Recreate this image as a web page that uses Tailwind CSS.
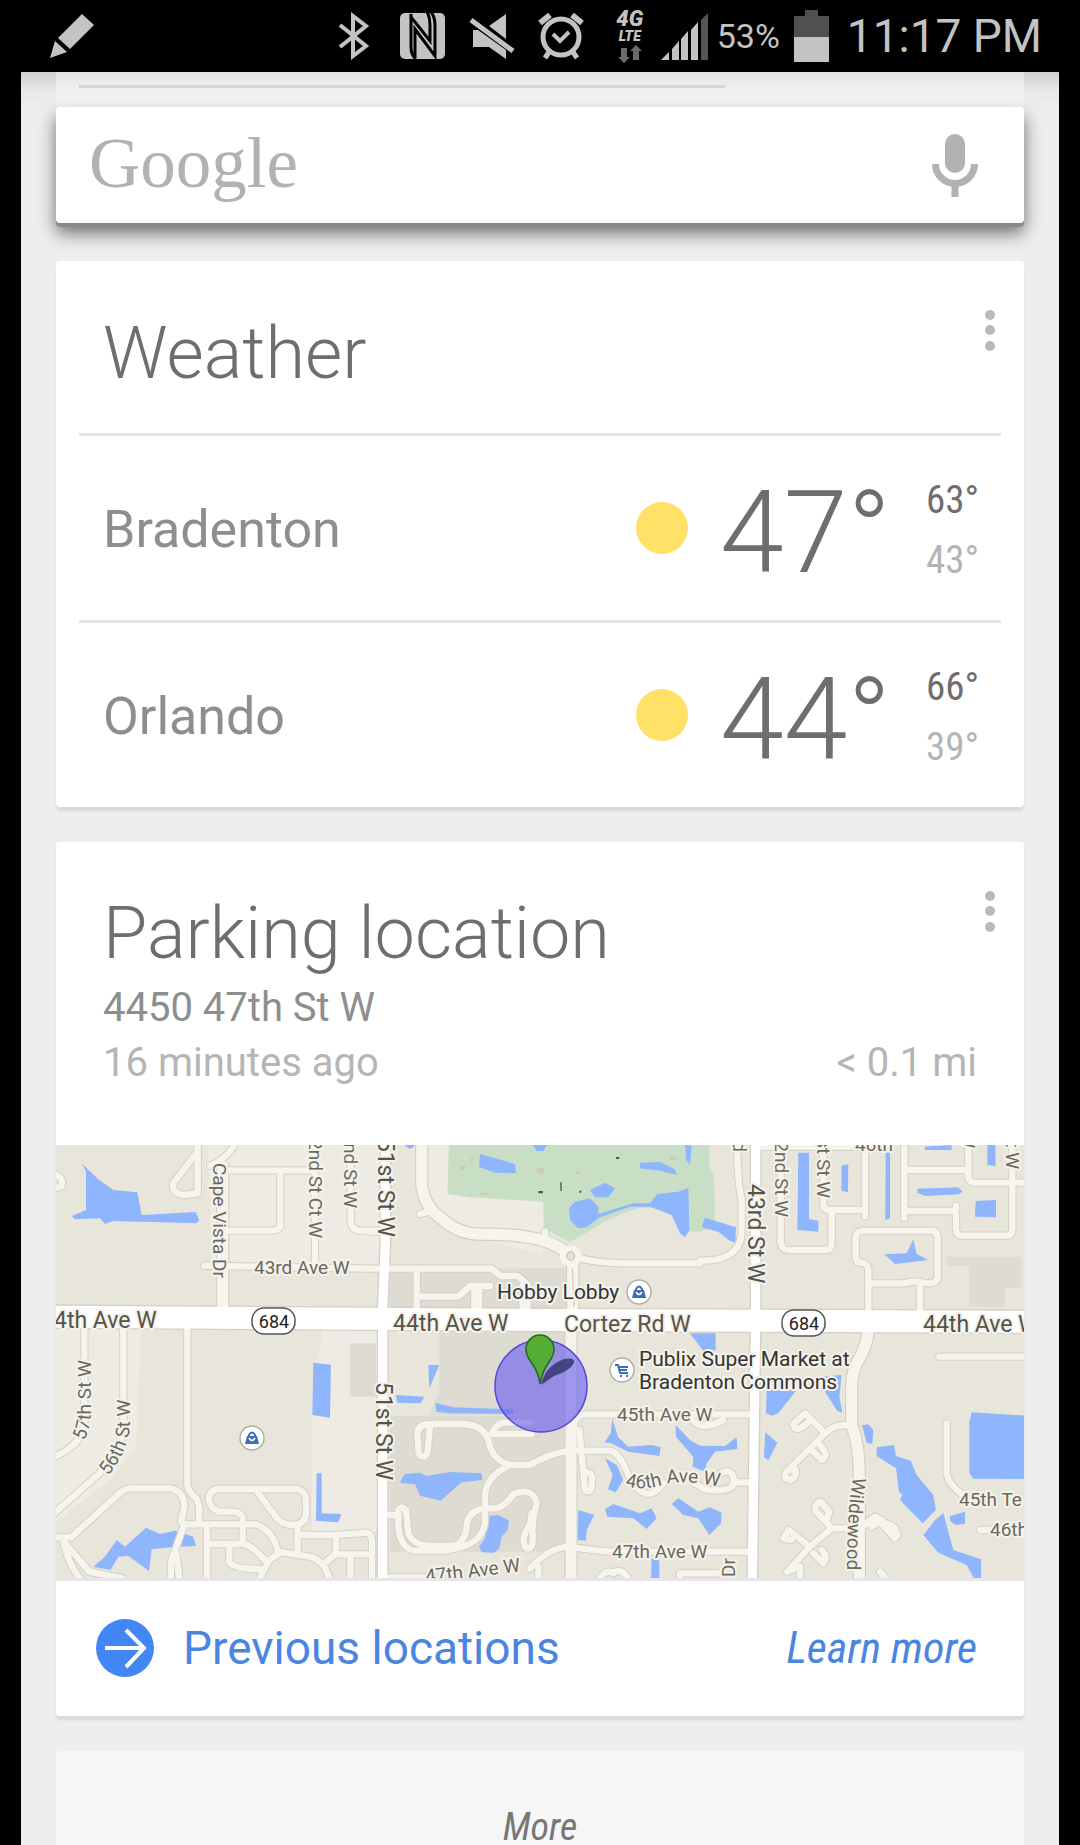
<!DOCTYPE html>
<html lang="en">
  <head>
    <meta charset="UTF-8" />
    <meta name="viewport" content="width=device-width, initial-scale=1.0" />
    <title>Google Now</title>
    <script src="https://cdn.jsdelivr.net/npm/@tailwindcss/browser@4"></script>
  </head>
  <body class="bg-black h-screen overflow-hidden flex flex-col font-['Roboto',sans-serif]">
    <!-- Status bar -->
    <header class="h-[72px] shrink-0 flex items-center pl-[49px] pr-[38px] text-[#c3c3c3]">
      <svg class="w-[46px] h-[46px]" viewBox="0 0 46 46" fill="currentColor">
        <path d="M33 1 L45 12 L21 36 L9 25 Z M6 28 L18 39 L1 45 Z" />
      </svg>

      <div class="ml-auto flex items-center">
        <!-- Bluetooth -->
        <svg class="w-8 h-[48px]" viewBox="0 0 32 48" fill="none" stroke="currentColor" stroke-width="4">
          <path d="M2 13 L28 34 L15 44 V4 L28 14 L2 35" />
        </svg>
        <!-- NFC -->
        <svg class="w-[45px] h-[46px] ml-[30px]" viewBox="0 0 45 46">
          <rect width="45" height="46" rx="5" fill="currentColor" />
          <path d="M11 1 V34 Q11 42 16 46 M11 4 L30 28 V12 Q30 4 27 -1 M15 44 V16 L35 43 V12 Q35 4 31 -1" fill="none" stroke="#000" stroke-width="3" />
        </svg>
        <!-- Muted -->
        <svg class="w-[46px] h-[48px] ml-6" viewBox="0 0 46 48" fill="currentColor">
          <path d="M37 2 V27 L20 14 Z M4 18 H9 L37 38 V47 L20 35 H4 Z" />
          <path d="M2 8 L44 39" stroke="currentColor" stroke-width="5" />
        </svg>
        <!-- Alarm -->
        <svg class="w-[48px] h-[48px] ml-[22px]" viewBox="0 0 48 48" fill="none" stroke="currentColor" stroke-width="5">
          <circle cx="24" cy="25" r="18" />
          <path d="M16 22 L23 29 L32 20" stroke-width="4" />
          <path d="M3 11 L13 3 M35 3 L45 11" stroke-width="6" />
          <path d="M12 40 L8 46 M36 40 L40 46" />
        </svg>
        <!-- 4G LTE -->
        <div class="ml-[28px] w-[34px] flex flex-col items-center">
          <span class="font-black italic text-[22px] leading-[20px]">4G</span>
          <span class="font-black italic text-[14px] leading-[14px]">LTE</span>
          <svg class="w-6 h-[18px] mt-[2px]" viewBox="0 0 24 18" fill="#6b6b6b">
            <path d="M3 3 H9 V12 H12 L6 18 L0 12 H3 Z M15 15 V6 H12 L18 0 L24 6 H21 V15 Z" />
          </svg>
        </div>
        <!-- Signal -->
        <svg class="w-[47px] h-[47px] ml-[14px]" viewBox="0 0 47 47" fill="currentColor">
          <path d="M8 39 V47 H0 Z M18 28 V47 H11 V36 Z M27 18 V47 H20 V26 Z M37 9 V47 H30 V17 Z" />
          <path d="M47 0 V47 H40 V7 Z" fill="#555" />
        </svg>
        <span class="ml-[9px] text-[34px] leading-10">53%</span>
        <!-- Battery -->
        <svg class="w-[35px] h-[52px] ml-[14px]" viewBox="0 0 35 52">
          <path d="M0 6 H11 V0 H24 V6 H35 V28 H0 Z" fill="#505050" />
          <path d="M0 27 H35 V52 H0 Z" fill="currentColor" />
        </svg>
        <time class="ml-[18px] text-[46px] leading-[54px]">11:17 PM</time>
      </div>
    </header>

    <main class="flex-1 mx-[21px] px-[35px] bg-[#eee] flex flex-col">
      <!-- Card scrolled under the search box -->
      <div class="-mx-[35px] px-[35px] h-[35px] shrink-0 bg-linear-to-b from-[#d2d2d2] via-[#e6e6e6] to-[#eee]">
        <div class="h-full bg-white/40 pt-[13px] pl-[23px]">
          <hr class="w-[646px] border-t-3 border-[#d6d6d6]" />
        </div>
      </div>

      <!-- Search -->
      <form class="h-[116px] shrink-0 bg-white rounded px-[33px] pr-[46px] flex items-center shadow-[0_4px_0_#8a8a8a,0_10px_18px_rgba(0,0,0,0.55)]">
        <label for="q" class="pb-1 font-['Liberation_Serif',serif] text-[71px] leading-[80px] text-[#b2b2b2]">Google</label>
        <input id="q" type="search" class="flex-1 min-w-0 h-20 px-4 text-[40px] outline-none" />
        <button type="button" aria-label="Voice search">
          <svg class="w-[46px] h-[63px]" viewBox="0 0 46 63" fill="#b2b2b2">
            <rect x="13" width="20" height="39" rx="10" />
            <path d="M3.5 30 A19.5 19.5 0 0 0 42.5 30 M23 49 V63" fill="none" stroke="#b2b2b2" stroke-width="7" />
          </svg>
        </button>
      </form>

      <!-- Weather -->
      <section class="mt-[38px] shrink-0 bg-white rounded shadow-[0_4px_2px_#dadada] px-[23px]">
        <div class="h-[172px] flex justify-between pl-6 pr-[6px]">
          <h2 class="pt-[50px] text-[72px] leading-[86px] font-light text-[#6e6e6e]">Weather</h2>
          <button type="button" aria-label="Weather options" class="self-start mt-[49px]">
            <svg class="w-[10px] h-[41px]" viewBox="0 0 10 41" fill="#bababa">
              <circle cx="5" cy="5" r="5" /><circle cx="5" cy="20" r="5" /><circle cx="5" cy="36" r="5" />
            </svg>
          </button>
        </div>
        <ul>
          <li class="h-[187px] border-t-3 border-[#e4e4e4] flex items-center pl-6 pr-[22px]">
            <span class="flex-1 pt-1 text-[52px] leading-[60px] text-[#8e8e8e]">Bradenton</span>
            <svg class="w-[52px] h-[52px]" viewBox="0 0 52 52" fill="#ffe168"><circle cx="26" cy="26" r="26" /></svg>
            <span class="ml-8 w-[175px] pt-[10px] text-[115px] leading-[134px] font-light text-[#6e6e6e]">47°</span>
            <span class="ml-[31px] pt-[3px] flex flex-col font-['Roboto_Condensed','Liberation_Sans_Narrow',sans-serif] text-[39px] leading-[60px]">
              <span class="text-[#6e6e6e]">63°</span>
              <span class="text-[#b5b5b5]">43°</span>
            </span>
          </li>
          <li class="h-[187px] border-t-3 border-[#e4e4e4] flex items-center pl-6 pr-[22px]">
            <span class="flex-1 pt-1 text-[52px] leading-[60px] text-[#8e8e8e]">Orlando</span>
            <svg class="w-[52px] h-[52px]" viewBox="0 0 52 52" fill="#ffe168"><circle cx="26" cy="26" r="26" /></svg>
            <span class="ml-8 w-[175px] pt-[10px] text-[115px] leading-[134px] font-light text-[#6e6e6e]">44°</span>
            <span class="ml-[31px] pt-[3px] flex flex-col font-['Roboto_Condensed','Liberation_Sans_Narrow',sans-serif] text-[39px] leading-[60px]">
              <span class="text-[#6e6e6e]">66°</span>
              <span class="text-[#b5b5b5]">39°</span>
            </span>
          </li>
        </ul>
      </section>

      <!-- Parking location -->
      <section class="mt-[35px] shrink-0 bg-white rounded shadow-[0_4px_2px_#dadada]">
        <div class="h-[303px] pl-[47px] pr-[47px] pt-[49px]">
          <div class="flex justify-between">
            <h2 class="text-[72px] leading-[86px] font-light text-[#6e6e6e]">Parking location</h2>
            <button type="button" aria-label="Parking options" class="self-start -mr-[18px]">
              <svg class="w-[10px] h-[41px]" viewBox="0 0 10 41" fill="#bababa">
                <circle cx="5" cy="5" r="5" /><circle cx="5" cy="20" r="5" /><circle cx="5" cy="36" r="5" />
              </svg>
            </button>
          </div>
          <p class="mt-[3px] text-[40px] leading-[56px] text-[#8e8e8e]">4450 47th St W</p>
          <p class="flex justify-between text-[40px] leading-[54px] text-[#b5b5b5]">
            <span>16 minutes ago</span>
            <span>&lt; 0.1 mi</span>
          </p>
        </div>

        <!-- Map -->
        <svg class="block w-full h-auto border-b-3 border-[#e6e6e6] box-content" viewBox="0 0 968 433" role="img" aria-label="Map of the parking location">
          <defs>
            <g id="minor" fill="none" stroke-linecap="round" stroke-linejoin="round">
              <!-- north west -->
              <path d="M545 -20 Q520 40 462 62 M425 -20 V145 L380 150 Q340 140 355 110 L425 20 M-5 88 Q28 100 15 125 L-5 130" />
              <path d="M502 76 H765 M673 76 V245 Q665 257 645 257 H502 M777 -20 V365 M884 -20 V230 Q888 257 915 257 H990" />
              <path d="M445 362 L942 371 H1307 L1335 393 H1385 L1412 415" />
              <!-- south west -->
              <path d="M85 550 V830 Q80 900 -5 935 M202 550 V840 Q195 920 130 985 L-5 1105 M394 550 V1020 Q400 1045 420 1060 Q435 1080 428 1130" />
              <path d="M-5 1177 H45 L190 1045 Q205 1030 230 1030 H345 Q385 1040 385 1085 L375 1130 M382 1138 H600 Q655 1160 665 1220 L760 1235 Q810 1245 825 1320" />
              <path d="M385 1138 L345 1250 V1320 M362 1230 L372 1320 M20 1177 Q30 1250 85 1320 M28 1195 L100 1280 L200 1300 M453 1140 V1320" />
              <path d="M560 1140 V1115 Q550 1100 530 1100 H490 Q460 1090 458 1060 Q462 1032 490 1032 H725 Q750 1040 750 1065 V1110 Q745 1140 710 1140 Q675 1140 655 1110 L600 1035" />
              <path d="M560 1140 V1197 H455 M560 1197 Q590 1200 635 1255 L600 1320 M520 1200 V1250 Q530 1272 610 1272 M670 1225 L632 1250 M725 1140 V1230 M725 1170 H840 L930 1163 Q950 1165 948 1200 V1320 M840 1170 V1225 L812 1250 M840 1228 H945 M883 1228 V1320" />
              <!-- north centre -->
              <g transform="translate(942 -15)">
                <path d="M0 275 H40 M140 395 V515 M150 470 H265 L300 438 H360 M620 352 Q680 370 760 370 H990 M150 222 L175 215 M525 300 V275" />
              </g>
              <!-- north east -->
              <g transform="translate(1932 -15)">
                <path d="M0 362 Q125 365 125 270 V180 Q110 110 112 0 M185 20 H560 M242 20 V305 Q245 330 265 330 H375 Q395 330 395 305 V210 M370 20 V195 Q372 210 390 210 H495 M495 20 V228" />
                <path d="M613 -5 V235 M613 90 H805 M805 0 V112 Q808 128 825 128 H985 M613 213 H768 M768 198 V270 Q770 287 790 287 H920 Q937 287 937 268 V0" />
                <path d="M505 530 V385 Q500 368 482 368 Q467 366 467 350 V290 Q470 272 490 272 H692 Q713 272 713 292 V410 Q710 430 690 430 L640 424 L610 430 H505 M660 430 V520" />
              </g>
              <!-- south centre -->
              <g transform="translate(942 615)">
                <path d="M180 230 L172 310 Q158 330 146 310 L142 250 Q145 222 180 222 H280 Q340 225 355 270 Q365 330 420 345 H480 Q540 310 600 302 H720 Q750 310 775 375" />
                <path d="M365 252 H485 M365 252 Q375 225 400 218 H480 M420 345 Q345 380 345 440 V520 Q335 590 220 602 H130 Q90 590 85 530 V480 Q95 465 108 480 L115 550 Q130 588 190 588 H250 Q290 575 290 520 Q300 480 345 475 H380 Q410 465 430 432 Q490 410 500 460 Q485 510 488 560 Q490 600 470 595 Q455 580 465 550 Q485 520 485 490" />
                <path d="M60 495 H85 M628 240 L645 420 Q668 435 665 395 Q672 370 645 365 M612 230 Q612 193 650 193 H1140 M480 655 Q540 590 600 590 Q690 605 740 605 H1140 M60 682 H170 M505 650 V700 M780 385 Q830 470 880 400 M690 685 Q710 655 730 670 Q750 650 775 685 M930 690 V670 H1050" />
                <path d="M960 200 Q990 250 1060 210 M960 385 Q1000 430 1050 420 Q1095 420 1092 390 Q1085 350 1050 372 M1092 397 H1140" />
              </g>
              <!-- south east -->
              <g transform="translate(1932 615)">
                <path d="M440 225 Q400 225 375 250 L262 362 M375 250 L315 190 L280 222 Q285 245 305 232 L335 210 M330 295 L365 330 Q385 320 372 300 L352 275 M262 362 Q245 385 270 390 Q295 380 285 358 Z" />
                <path d="M470 535 H395 L330 590 L262 665 M395 535 L345 480 Q345 460 362 455 L388 485 L378 515 M330 590 L265 540 L250 565 L275 570 M340 610 L370 640 Q385 620 365 600 M262 665 L300 650 V680 M480 535 L525 500 L545 510 L515 530 M545 520 L585 565 Q600 550 580 530 L560 520" />
                <path d="M740 220 V370 Q745 405 790 435 M840 540 H975 M718 20 H980 M540 665 L570 700" />
              </g>
            </g>
            <g id="collector" fill="none" stroke-linejoin="round">
              <g transform="translate(942 -15)">
                <path d="M155 -20 V130 Q160 200 220 240 Q270 285 340 283 Q450 280 530 305 Q570 320 600 345 M608 350 V530" />
                <path d="M603 570 V1320" />
                <path d="M320 438 V515 M465 430 V515" />
              </g>
              <path d="M500 50 V500" />
              <path d="M2437 550 Q2435 600 2410 640 Q2387 680 2387 720 V840 Q2410 900 2410 990 V1320" />
            </g>
            <g id="bag">
              <circle r="12" fill="#fff" stroke="#b0aea6" stroke-width="1.5" />
              <path d="M-7 6 L-5 -2 H5 L7 6 Z" fill="#3c6db5" />
              <path d="M-3 -2 V-3 Q0 -8 3 -3 V-2" fill="none" stroke="#3c6db5" stroke-width="2" />
              <path d="M-3 0 Q0 5 3 0" fill="none" stroke="#fff" stroke-width="1.5" />
            </g>
            <path id="st57" d="M28 296 Q36 280 35 260 V195" />
            <path id="st56" d="M52 331 Q73 305 74 280 V230" />
            <path id="ave46" d="M569 341 Q585 346 606 340 T665 342" />
            <path id="wildewood" d="M797 332 Q790 370 791 445" />
          </defs>

          <rect width="968" height="433" fill="#e8e6db" />
          <g transform="scale(0.33333)">
            <!-- land -->
            <g fill="#eeebe4">
              <path d="M455 0 H980 V365 H470 Z M0 550 H255 L240 900 L170 1000 L0 1130 Z M800 550 H965 V1160 H768 V820 H765 Z" />
              <path d="M1000 0 H1090 V150 Q1150 260 1300 290 L1460 330 V170 L1175 145 V0 Z" />
            </g>
            <g fill="#dedcd2">
              <path d="M1000 370 H1530 V490 H1000 Z M882 595 H960 V755 H882 Z M1150 550 H1530 V810 H1120 L1150 740 Z M1002 812 H1545 V1220 H1002 Z" />
              <path d="M2670 335 H2897 V430 H2847 V485 H2740 V363 H2672 Z" />
            </g>
            <!-- park -->
            <g transform="translate(942 -15)">
              <path d="M238 0 L232 162 L300 172 L520 185 L522 265 L600 307 Q700 245 780 212 Q850 190 900 220 L955 275 H990 L1035 262 L1032 105 L1018 80 V0 Z" fill="#c8dfc6" />
              <path d="M270 78 h14 v12 h-14 Z M300 55 h8 v10 h-8 Z M500 85 h22 v16 h-22 Z M330 158 h24 v8 h-24 Z M615 95 h12 v8 h-12 Z M900 50 h20 v10 h-20 Z" fill="#c9cfae" />
              <path d="M571 126 h4 v27 h-4 Z M505 153 h14 v7 h-14 Z M738 51 h10 v6 h-10 Z M628 152 h6 v6 h-6 Z" fill="#47604c" />
              <path d="M700 246 Q760 215 820 205 Q880 205 905 230 L930 282 L950 290 L990 275 V355 H760 L640 335 L610 310 Z" fill="#e8e6db" />
            </g>
            <!-- water -->
            <g fill="#8fb6fc">
              <path transform="translate(-18 -15)" d="M97 72 L145 118 L190 150 L262 157 L275 225 L437 216 L448 240 L440 250 L190 243 L165 252 L150 235 L75 238 L66 228 L108 210 V95 Z" />
              <path transform="translate(942 -15)" d="M330 42 L435 72 L438 100 L375 98 L327 82 Z M480 0 L500 33 L520 33 L535 10 Z M810 68 L870 66 L915 88 L920 104 L870 92 L810 85 Z M660 150 L705 128 L735 145 L715 172 H675 Z M597 205 L615 185 L660 175 L685 200 V222 L790 190 H840 L862 162 L925 155 L955 143 L958 270 L945 292 L930 280 L905 225 L840 200 H780 L690 232 L650 262 L625 265 L600 240 Z M945 0 L965 20 L960 75 L948 60 Z M100 12 L118 27 L132 20 V10 Z M960 580 L1037 580 V630 L1005 640 Z" />
              <path transform="translate(1932 -15)" d="M15 233 L108 262 L106 308 L85 300 L55 275 L5 262 Z M295 38 H327 V237 L355 242 V275 L292 270 Z M425 77 L445 72 L444 157 L424 152 Z M557 32 L570 40 V235 L556 240 Z M675 20 L755 15 V30 H675 Z M862 10 H886 L887 78 L862 75 Z M652 146 L775 142 L788 155 L775 163 L675 168 L652 158 Z M827 183 L888 180 V232 L825 230 Z M553 343 L620 340 L640 298 L650 342 L685 360 L585 372 Z" />
              <path transform="translate(-18 615)" d="M130 650 L165 620 L200 570 L225 590 L288 533 L330 552 L375 542 L430 560 L438 588 L380 590 L305 598 L297 663 L235 618 L205 620 L182 660 Z M790 38 L843 44 L840 203 L787 195 Z M800 370 H815 V490 L874 492 L865 517 L798 512 Z" />
              <path transform="translate(942 615)" d="M175 45 H208 L178 115 Z M78 135 L163 140 L152 160 L82 158 Z M195 158 L250 172 L430 178 L428 192 L240 190 L200 185 Z M90 395 L105 372 L150 368 L170 378 L240 366 L335 370 L337 390 L275 397 L212 452 L150 437 L135 403 L95 400 Z M360 497 L385 495 L417 512 L413 540 L395 560 L388 595 L372 608 L335 607 L327 590 L345 565 Z M727 208 L745 262 L775 290 L845 285 L872 292 L868 318 L775 305 L720 278 H703 L722 250 Z M705 325 L740 345 L760 390 L737 427 L714 418 L728 375 Z M625 480 L673 495 L650 540 L648 572 L622 570 Z M705 478 L730 462 L810 490 L845 475 L860 505 L830 537 L790 505 L712 500 Z" />
              <path transform="translate(942 615)" d="M905 462 L925 445 L985 485 L1020 472 L1055 488 L1053 520 L1018 555 L985 505 L940 495 Z M917 225 L960 270 L990 287 L1065 288 L1100 262 L1102 297 L1035 305 L1010 340 L1005 365 L968 350 L970 320 L918 260 Z M845 625 L868 632 V700 H843 Z" />
              <path transform="translate(1932 615)" d="M200 120 H290 L235 190 L215 197 L198 190 Z M365 80 L425 75 L418 140 L427 188 L412 183 L375 125 Z M196 247 L232 278 L205 331 L192 322 Z M486 226 L505 223 L520 240 L517 282 L500 278 Z M530 292 L582 285 L588 318 L632 332 L650 375 L700 435 L708 480 L668 520 L600 450 L607 435 L597 425 L588 355 L530 318 Z M730 490 L760 600 L843 628 V700 H830 L800 645 L715 608 L670 555 L705 510 Z M750 498 L795 485 V522 L765 524 L750 512 Z M815 187 L980 197 V387 L820 386 L808 370 V215 Z" />
            </g>
            <!-- roads -->
            <use href="#minor" stroke="#d3d1c6" stroke-width="25" />
            <use href="#collector" stroke="#d3d1c6" stroke-width="40" />
            <path d="M0 515 L1500 525 L2904 530" stroke="#d3d1c6" stroke-width="74" />
            <path d="M988 0 V300 L980 485 V1299 M2099 0 V510 L2089 1299" stroke="#d3d1c6" stroke-width="36" fill="none" />
            <use href="#minor" stroke="#f6f4ec" stroke-width="19" />
            <use href="#collector" stroke="#f6f4ec" stroke-width="33" />
            <circle cx="1544" cy="333" r="32" fill="#f6f4ec" />
            <circle cx="1544" cy="333" r="12" fill="#e4e2d8" stroke="#c9c7bc" stroke-width="4" />
            <path d="M1549 370 L1555 485" stroke="#d3d1c6" stroke-width="4" />
            <path d="M0 515 L1500 525 L2904 530" stroke="#fff" stroke-width="66" />
            <path d="M988 0 V300 L980 485 V1299 M2099 0 V510 L2089 1299" stroke="#fff" stroke-width="28" fill="none" />
          </g>

          <!-- accuracy circle and pin -->
          <circle cx="485" cy="241" r="46" fill="#6458f0" fill-opacity="0.6" stroke="#5646dc" stroke-width="1.5" />
          <path d="M485 240 Q489 221 508 214 Q520 212 518 218 Q514 226 498 231 Z" fill="#2b2960" fill-opacity="0.75" />
          <path d="M484 239 Q483 228 475 217 Q470 210 470 204 A14 14 0 0 1 498 204 Q498 210 493 217 Q486 227 484 239 Z" fill="#55ad35" stroke="#28661b" stroke-width="1.5" />

          <!-- highway shields -->
          <g fill="#fff" stroke="#555" stroke-width="1.5">
            <rect x="196" y="163" width="43" height="26" rx="12" />
            <rect x="726" y="165" width="43" height="26" rx="12" />
          </g>
          <g fill="#222" font-size="18" text-anchor="middle">
            <text x="218" y="183">684</text>
            <text x="748" y="185">684</text>
          </g>

          <!-- places -->
          <use href="#bag" x="583" y="147" />
          <use href="#bag" x="196" y="293" />
          <circle cx="566" cy="225" r="12" fill="#fff" stroke="#b0aea6" stroke-width="1.5" />
          <path d="M559 220 H562 L564 228 H572 M563 222 H572 M564 225 H571" fill="none" stroke="#3c6db5" stroke-width="2" />
          <path d="M564 230 h2 v2 h-2 Z M570 230 h2 v2 h-2 Z" fill="#3c6db5" />

          <!-- labels -->
          <g stroke="#f4f2ea" stroke-width="4" stroke-linejoin="round" paint-order="stroke">
            <g fill="#333" font-size="21">
              <text x="441" y="154">Hobby Lobby</text>
              <text x="583" y="221">Publix Super Market at</text>
              <text x="583" y="244">Bradenton Commons</text>
            </g>
            <g fill="#55534a" font-size="23">
              <text x="-2" y="183">4th Ave W</text>
              <text x="337" y="186">44th Ave W</text>
              <text x="508" y="187">Cortez Rd W</text>
              <text x="867" y="187">44th Ave W</text>
              <text transform="translate(322 92) rotate(90)" text-anchor="end">51st St W</text>
              <text transform="translate(320 237) rotate(90)">51st St W</text>
              <text transform="translate(692 39) rotate(90)">43rd St W</text>
            </g>
            <g fill="#6a685e" font-size="19">
              <text x="198" y="129">43rd Ave W</text>
              <text x="561" y="276">45th Ave W</text>
              <text x="556" y="413">47th Ave W</text>
              <text x="903" y="361">45th Te</text>
              <text x="934" y="391">46th</text>
              <text x="799" y="6">40th</text>
              <text transform="translate(370 438) rotate(-7)">47th Ave W</text>
              <text transform="translate(157 18) rotate(90)">Cape Vista Dr</text>
              <text transform="translate(253 93) rotate(90)" text-anchor="end">52nd St Ct W</text>
              <text transform="translate(288 63) rotate(90)" text-anchor="end">52nd St W</text>
              <text transform="translate(719 72) rotate(90)" text-anchor="end">42nd St W</text>
              <text transform="translate(761 53) rotate(90)" text-anchor="end">41st St W</text>
              <text transform="translate(677 7) rotate(90)" text-anchor="end">Rd</text>
              <text transform="translate(906 3) rotate(90)" text-anchor="end">St W</text>
              <text transform="translate(950 24) rotate(90)" text-anchor="end">St W</text>
              <text transform="translate(679 432) rotate(-90)">Dr</text>
              <text><textPath href="#st57">57th St W</textPath></text>
              <text><textPath href="#st56">56th St W</textPath></text>
              <text><textPath href="#ave46">46th Ave W</textPath></text>
              <text><textPath href="#wildewood">Wildewood</textPath></text>
            </g>
          </g>
        </svg>

        <div class="h-[135px] pl-10 pr-[47px] pb-[2px] flex items-center justify-between text-[#4a86e0]">
          <a href="#" class="flex items-center gap-[29px] text-[46px] leading-[54px]">
            <svg class="w-[58px] h-[58px]" viewBox="0 0 58 58">
              <circle cx="29" cy="29" r="29" fill="#4285f4" />
              <path d="M9 29 H48 M30 11 L48 29 L30 48" fill="none" stroke="#fff" stroke-width="4" />
            </svg>
            Previous locations
          </a>
          <a href="#" class="font-['Roboto_Condensed','Liberation_Sans_Narrow',sans-serif] italic text-[44px] leading-[54px]">Learn more</a>
        </div>
      </section>

      <!-- More -->
      <button type="button" class="mt-[35px] h-[152px] shrink-0 bg-[#f6f6f6] rounded-t font-['Roboto_Condensed','Liberation_Sans_Narrow',sans-serif] italic text-[38px] leading-[48px] text-[#777]">More</button>
    </main>
  </body>
</html>
